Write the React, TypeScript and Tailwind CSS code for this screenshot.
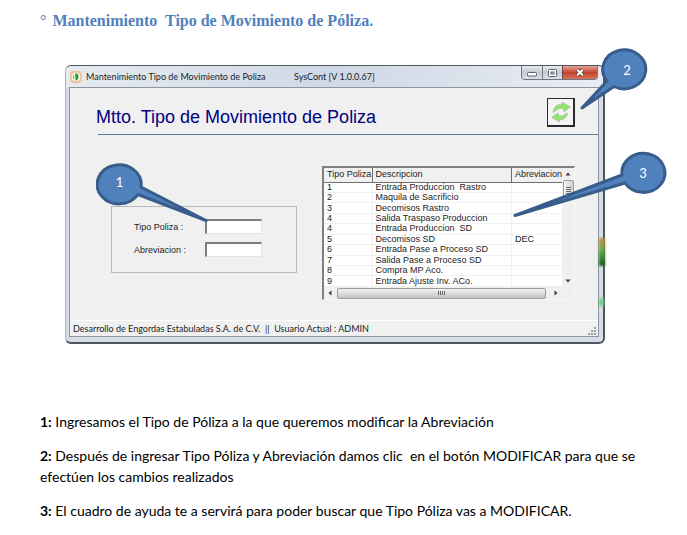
import type { ReactNode } from "react";

type Row = { tipo: number; descripcion: string; abreviacion?: string };

const rows: Row[] = [
  { tipo: 1, descripcion: "Entrada Produccion  Rastro" },
  { tipo: 2, descripcion: "Maquila de Sacrificio" },
  { tipo: 3, descripcion: "Decomisos Rastro" },
  { tipo: 4, descripcion: "Salida Traspaso Produccion" },
  { tipo: 4, descripcion: "Entrada Produccion  SD" },
  { tipo: 5, descripcion: "Decomisos SD", abreviacion: "DEC" },
  { tipo: 6, descripcion: "Entrada Pase a Proceso SD" },
  { tipo: 7, descripcion: "Salida Pase a Proceso SD" },
  { tipo: 8, descripcion: "Compra MP Aco." },
  { tipo: 9, descripcion: "Entrada Ajuste Inv. ACo." },
];

function AppIcon() {
  return (
    <svg width="12" height="12" viewBox="0 0 12 12" aria-hidden="true">
      <rect width="12" height="12" rx="3" fill="#f0c9a0" />
      <circle cx="6" cy="6" r="5" fill="#fdfdf6" stroke="#dba878" strokeWidth="0.8" />
      <path d="M3.4 3.2C2.4 5 2.6 7.600 4 9L4.600 6Z" fill="#7cc07c" />
      <path d="M5 2.600C7.500 2.200 9 4 8.600 6.400C8.300 8.400 7 9.600 5.600 9.600Z" fill="#2f9e3a" />
    </svg>
  );
}

function RefreshIcon() {
  return (
    <svg width="20" height="22" viewBox="0 0 20 22" aria-hidden="true">
      <g fill="#8ee66b" stroke="#b4bfae" strokeWidth="0.8" strokeLinejoin="round">
        <path d="M2 11.500C2.500 6 6.500 2.800 11.300 3.300L11 1L19.500 6L13 10.800L12.600 7.800C9 6.800 6 7.800 4.600 10Z" />
        <path d="M16.500 12C16 16.500 12.500 19.300 8.500 18.700L8.700 21L0.700 16.400L7 11.800L7.500 14.600C10.500 15.500 13 14.500 14.500 12.600Z" />
      </g>
    </svg>
  );
}

function CaptionButtons() {
  return (
    <div className="flex h-[14px] overflow-hidden rounded-b border border-t-0 border-[#6e7885]">
      <button aria-label="Minimizar" className="flex w-[20px] items-end justify-center bg-linear-to-b from-[#e8ebef] via-[#c3c9d1] to-[#dde1e7] pb-[2px]">
        <svg width="10" height="5" viewBox="0 0 10 5">
          <rect x="0.500" y="0.500" width="9" height="3.500" rx="1" fill="#fff" stroke="#5c636d" />
        </svg>
      </button>
      <button aria-label="Maximizar" className="flex w-[20px] items-center justify-center border-l border-[#6e7885] bg-linear-to-b from-[#e8ebef] via-[#c3c9d1] to-[#dde1e7]">
        <svg width="9" height="8" viewBox="0 0 9 8">
          <rect x="0.500" y="0.500" width="8" height="7" rx="1" fill="#fff" stroke="#5c636d" />
          <rect x="3" y="3" width="3" height="2" fill="#d5dae0" stroke="#5c636d" />
        </svg>
      </button>
      <button aria-label="Cerrar" className="flex w-[35px] items-center justify-center border-l border-[#6e4a48] bg-linear-to-b from-[#e3a296] via-[#c4432c] to-[#d8705a]">
        <svg width="10" height="9" viewBox="0 0 10 9">
          <path d="M2 1.500L8 7.500M8 1.500L2 7.500" stroke="#5f3a3a" strokeWidth="3.600" />
          <path d="M2.200 1.700L7.800 7.300M7.800 1.700L2.200 7.300" stroke="#fff" strokeWidth="2" />
        </svg>
      </button>
    </div>
  );
}

function Field({ id, label }: { id: string; label: string }) {
  return (
    <div className="flex items-center">
      <label htmlFor={id} className="w-[71px]">{label}</label>
      <input
        id={id}
        className="h-[15px] w-[57px] border border-t-2 border-l-2 border-[#e3e3e3] border-t-[#7d7d7d] border-l-[#7d7d7d] bg-white px-1 outline-none"
      />
    </div>
  );
}

function Arrow({ d, label }: { d: string; label: string }) {
  return (
    <button aria-label={label} className="flex size-3 shrink-0 items-center justify-center">
      <svg width="6" height="6" viewBox="0 0 6 6" fill="#3a3a3a">
        <path d={d} />
      </svg>
    </button>
  );
}

function PolizaList() {
  return (
    <div className="w-[253px] border border-t-2 border-l-2 border-[#f8f8f8] border-t-[#7f7f7f] border-l-[#7f7f7f] bg-white">
      <div className="flex">
        <table className="h-[119px] flex-1 table-fixed border-collapse text-left leading-[9px] whitespace-pre">
          <colgroup>
            <col className="w-[48px]" />
            <col />
            <col className="w-[50px]" />
          </colgroup>
          <thead>
            <tr className="h-[14px] border-b border-[#6f6f6f] bg-[#f0f0f0]">
              <th className="border-r border-[#6f6f6f] p-0 pl-[3px] font-normal">Tipo Poliza</th>
              <th className="border-r border-[#6f6f6f] p-0 pl-[3px] font-normal">Descripcion</th>
              <th className="p-0 pl-[3px] font-normal">Abreviacion</th>
            </tr>
          </thead>
          <tbody>
            {rows.map((row, i) => (
              <tr key={i} className="border-b border-[#f0f0f0]">
                <td className="border-r border-[#f0f0f0] p-0 pl-[3px]">{row.tipo}</td>
                <td className="border-r border-[#f0f0f0] p-0 pl-[3px]">{row.descripcion}</td>
                <td className="p-0 pl-[3px]">{row.abreviacion}</td>
              </tr>
            ))}
          </tbody>
        </table>
        <div className="flex w-3 flex-col items-center bg-[#f0f0f0]">
          <Arrow label="Subir" d="M3 1.500L5.500 4.500H0.500Z" />
          <div className="flex h-5 w-[11px] items-center justify-center rounded-xs border border-[#9b9b9b] bg-linear-to-r from-[#f6f6f6] to-[#cfcfcf]">
            <svg width="5" height="7" viewBox="0 0 5 7" stroke="#666">
              <path d="M0 0.500H5M0 2.500H5M0 4.500H5M0 6.500H5" />
            </svg>
          </div>
          <div className="flex-1" />
          <Arrow label="Bajar" d="M3 4.500L5.500 1.500H0.500Z" />
        </div>
      </div>
      <div className="flex h-3 items-center bg-[#f0f0f0]">
        <Arrow label="Izquierda" d="M1.500 3L4.500 0.500V5.500Z" />
        <div className="ml-px flex h-[11px] flex-1 items-center justify-center rounded-xs border border-[#9b9b9b] bg-linear-to-b from-[#f3f3f3] to-[#c4c4c4]">
          <svg width="7" height="4" viewBox="0 0 7 4" stroke="#666">
            <path d="M0.500 0V4M2.500 0V4M4.500 0V4M6.500 0V4" />
          </svg>
        </div>
        <div className="mr-3 ml-1 flex">
          <Arrow label="Derecha" d="M4.500 3L1.500 0.500V5.500Z" />
        </div>
      </div>
    </div>
  );
}

function Callout({ className, width, height, d, x, y, children }: {
  className: string; width: number; height: number; d: string; x: number; y: number; children: ReactNode;
}) {
  return (
    <svg className={`pointer-events-none absolute ${className}`} width={width} height={height} viewBox={`0 0 ${width} ${height}`}>
      <path d={d} fill="#4f81bd" stroke="#385d8a" strokeWidth="3" strokeLinejoin="round" />
      <text x={x} y={y} textAnchor="middle" fill="#fff" className="font-['Lato',sans-serif] text-[13px]">{children}</text>
    </svg>
  );
}

export default function App() {
  return (
    <main className="bg-white pt-[11px] pb-3 text-black">
      <h1 className="flex gap-[6px] pl-10 font-['Liberation_Serif',serif] text-[16px] leading-5 font-bold whitespace-pre text-[#4f81bd]">
        <span className="font-normal">°</span>
        <span>Mantenimiento  Tipo de Movimiento de Póliza.</span>
      </h1>

      <section className="relative mt-[34px] mr-[82px] ml-[65px] min-w-[540px] rounded-t-md rounded-b-md border-t border-r-2 border-b-2 border-l border-[#50555c] border-l-[#aab4c0] bg-[#d5dde9] pr-1 pb-[5px] pl-[3px] font-['Liberation_Sans',sans-serif] text-[9px] leading-[10px] text-[#1c1c1c]">
        <header className="-mr-1 -ml-[3px] flex h-[21px] items-start justify-between rounded-t-md bg-linear-to-r from-[#e6ebf2] via-[#cfd8e6] to-[#e9edf3] pr-[5px] pl-1">
          <div className="flex h-[21px] items-center gap-1 font-['Lato',sans-serif] whitespace-pre">
            <AppIcon />
            <span className="w-[204px]">Mantenimiento Tipo de Movimiento de Poliza</span>
            <span>SysCont [V 1.0.0.67]</span>
          </div>
          <CaptionButtons />
        </header>

        <div className="border border-[#8e959e] bg-[#f0f0f0]">
          <div className="ml-[28px] flex h-[47px] items-start justify-between border-b border-[#5f7793] pr-[23px]">
            <h2 className="mt-[17px] -ml-[2px] text-[18px] leading-6 text-[#000080]">Mtto. Tipo de Movimiento de Poliza</h2>
            <button aria-label="Modificar" className="mt-[10px] flex h-[29px] w-7 items-center justify-center border border-r-2 border-b-2 border-[#2b2b2b] bg-[#f4f4f4]">
              <RefreshIcon />
            </button>
          </div>

          <div className="flex items-start justify-between pt-[31px] pr-[23px] pb-5 pl-[41px]">
            <div className="mt-10 flex h-[67px] w-[186px] flex-col gap-2 border border-[#b9b9b9] pt-3 pl-[22px]">
              <Field id="tipo-poliza" label="Tipo Poliza :" />
              <Field id="abreviacion" label="Abreviacion :" />
            </div>
            <PolizaList />
          </div>

          <footer className="flex h-[16px] items-center justify-between border-t border-white pr-px pl-[3px] font-['Lato',sans-serif] whitespace-pre">
            <span>Desarrollo de Engordas Estabuladas S.A. de C.V.  ||  Usuario Actual : ADMIN</span>
            <svg className="self-end" width="10" height="10" viewBox="0 0 10 10" fill="#9a9a9a">
              <path d="M7 1h2v2h-2zM7 4h2v2h-2zM4 4h2v2h-2zM7 7h2v2h-2zM4 7h2v2h-2zM1 7h2v2h-2z" />
            </svg>
          </footer>
        </div>

        <div className="absolute top-[172px] -right-[2px] h-7 w-[6px] bg-linear-to-b from-[#c98a4a] via-[#4fae3c] to-[#1d5a1d] blur-[1px]" />
        <div className="absolute top-[232px] -right-[1px] h-2 w-[5px] bg-[#6fd48a] blur-[1px]" />

        <Callout className="top-[94px] left-[30px]" width={114} height={66} x={23.5} y={27}
          d="M45 27L110 60.500L42 34.500A22 19.500 0 1 1 45 27Z">1</Callout>
        <Callout className="-top-[18px] -right-[49px]" width={74} height={64} x={49} y={27}
          d="M29 33A21.500 19.500 0 1 1 36 38.500L4 60Z">2</Callout>
        <Callout className="top-[84px] -right-[64px]" width={156} height={68} x={132} y={28}
          d="M111 25A21.500 19.500 0 1 1 114 33L4 65.500Z">3</Callout>
      </section>

      <section className="mt-[67px] flex flex-col gap-[13px] pr-10 pl-10 font-['Lato',sans-serif] text-[14px] leading-[21px] whitespace-pre-wrap">
        <p><b>1:</b> Ingresamos el Tipo de Póliza a la que queremos modificar la Abreviación</p>
        <p><b>2:</b> Después de ingresar Tipo Póliza y Abreviación damos clic  en el botón MODIFICAR para que se efectúen los cambios realizados</p>
        <p><b>3:</b> El cuadro de ayuda te a servirá para poder buscar que Tipo Póliza vas a MODIFICAR.</p>
      </section>
    </main>
  );
}
